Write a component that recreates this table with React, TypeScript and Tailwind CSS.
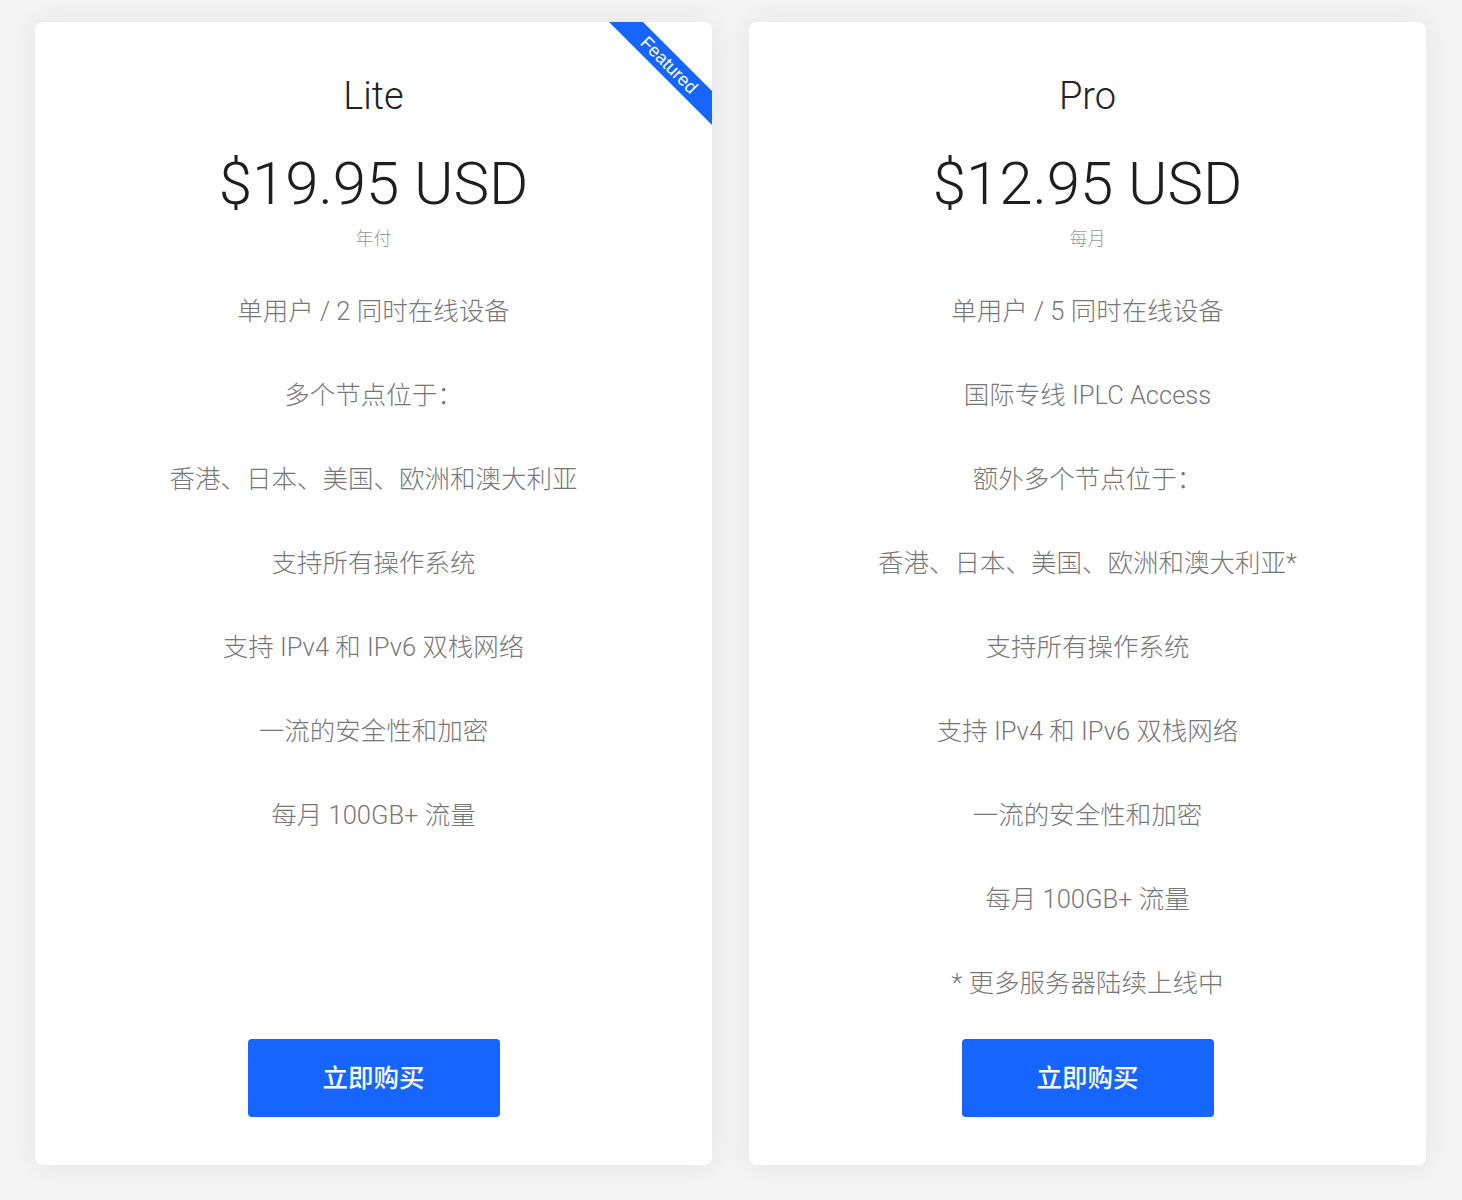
const plans = [
    {
        name: 'Lite',
        price: '$19.95 USD',
        period: '年付',
        featured: true,
        features: ['单用户 / 2 同时在线设备', '多个节点位于：', '香港、日本、美国、欧洲和澳大利亚', '支持所有操作系统', '支持 IPv4 和 IPv6 双栈网络', '一流的安全性和加密', '每月 100GB+ 流量'],
    },
    {
        name: 'Pro',
        price: '$12.95 USD',
        period: '每月',
        featured: false,
        features: [
            '单用户 / 5 同时在线设备',
            '国际专线 IPLC Access',
            '额外多个节点位于：',
            '香港、日本、美国、欧洲和澳大利亚*',
            '支持所有操作系统',
            '支持 IPv4 和 IPv6 双栈网络',
            '一流的安全性和加密',
            '每月 100GB+ 流量',
            '* 更多服务器陆续上线中',
        ],
    },
];

function PlanCard({ plan }: { plan: (typeof plans)[number] }) {
    return (
        <div className="relative flex flex-col items-center overflow-hidden rounded-lg bg-white pt-[52px] pb-[48px] shadow-[0_0_28px_rgba(0,0,0,0.06)]">
            {plan.featured && (
                <div className="absolute top-[31px] right-[-37px] flex h-[24px] w-[160px] rotate-45 items-center justify-center bg-[#1565fe] font-['Liberation_Sans',Arial,sans-serif] text-[18px] leading-none text-white">
                    Featured
                </div>
            )}
            <h2 className="text-[38px] leading-[44px] font-light text-[#222]">{plan.name}</h2>
            <div className="mt-[30px] text-[60px] leading-[72px] font-light text-[#1e1e1e]">{plan.price}</div>
            <div className="mt-[7px] text-[18px] leading-[24px] font-light text-[#999]">{plan.period}</div>
            <ul className="mt-[18px] mb-[14px] flex w-full flex-col">
                {plan.features.map((f) => (
                    <li key={f} className="flex h-[84px] items-center justify-center text-[25.5px] font-light text-[#777]">
                        {f}
                    </li>
                ))}
            </ul>
            <button className="mt-auto flex h-[78px] w-[252px] items-center justify-center rounded-[4px] bg-[#1565fe] text-[25.5px] font-medium text-white">
                立即购买
            </button>
        </div>
    );
}

export default function App() {
    return (
        <div className="min-h-[1200px] bg-[#f3f3f4] pt-[22px] pr-[36px] pl-[35px] font-['Roboto','Noto_Sans_CJK_SC',sans-serif]">
            <div className="grid grid-cols-2 gap-[37px]">
                {plans.map((p) => (
                    <PlanCard key={p.name} plan={p} />
                ))}
            </div>
        </div>
    );
}
